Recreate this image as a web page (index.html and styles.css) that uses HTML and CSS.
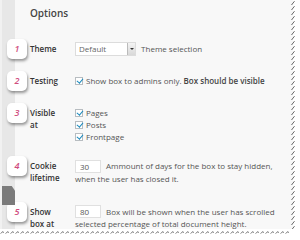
FILE: index.html
```html
<!DOCTYPE html>
<html lang="en">
  <head>
    <meta charset="UTF-8" />
    <title>Options</title>
    <link rel="stylesheet" href="styles.css">
  </head>
  <body>
    <div class="sheet">
      <div class="page">
        <!-- admin menu strip -->
        <div class="menu"><div class="menu-current"></div></div>

        <div class="content">
          <h2 class="title">Options</h2>

          <div class="row row-theme">
            <span class="badge">1</span>
            <div class="label">Theme</div>
            <div class="field">
              <span class="select">
                <span class="select-value">Default</span>
                <span class="select-arrow"></span>
              </span>
              <span class="hint">Theme selection</span>
            </div>
          </div>

          <div class="row row-testing">
            <span class="badge">2</span>
            <div class="label">Testing</div>
            <div class="field">
              <div class="check"><span class="box"></span>Show box to admins only.&nbsp;<strong>Box should be visible</strong></div>
            </div>
          </div>

          <div class="row row-visible">
            <span class="badge">3</span>
            <div class="label">Visible<br>at</div>
            <div class="field">
              <div class="check"><span class="box"></span>Pages</div>
              <div class="check"><span class="box"></span>Posts</div>
              <div class="check"><span class="box"></span>Frontpage</div>
            </div>
          </div>

          <div class="row row-cookie">
            <span class="badge">4</span>
            <div class="label">Cookie<br>lifetime</div>
            <div class="field">
              <span class="input">30</span>Ammount of days for the box to stay hidden,<br>when the user has closed it.
            </div>
          </div>

          <div class="row row-show">
            <span class="badge">5</span>
            <div class="label">Show<br>box at</div>
            <div class="field">
              <span class="input">80</span>Box will be shown when the user has scrolled<br>selected percentage of total document height.
            </div>
          </div>
        </div>

        <!-- torn paper, right side -->
        <svg class="edge-right" viewBox="0 0 8 229" preserveAspectRatio="none">
          <defs>
            <pattern id="tear-r" width="8" height="5" patternUnits="userSpaceOnUse">
              <path d="M1.5 5 L4.5 1.2" stroke="#666" stroke-width="1" fill="none" />
            </pattern>
          </defs>
          <rect x="0" y="0" width="3" height="229" fill="#f8f8f8" />
          <rect x="0" y="0" width="8" height="229" fill="url(#tear-r)" />
        </svg>
      </div>

      <!-- torn paper, bottom -->
      <svg class="edge-bottom" viewBox="0 0 296 6" preserveAspectRatio="none">
        <defs>
          <pattern id="tear-b" width="5" height="6" patternUnits="userSpaceOnUse">
            <path d="M0.5 4.5 L3 2.5 L3.5 4" stroke="#777" stroke-width="0.9" fill="none" />
          </pattern>
        </defs>
        <rect x="0" y="0" width="290" height="6" fill="url(#tear-b)" />
      </svg>
    </div>
  </body>
</html>
```

FILE: styles.css
```css
body {
  margin: 0;
  background-color: #ffffff;
  font-family: "Open Sans", "Liberation Sans", sans-serif;
}

.sheet {
  width: 298px;
}

.page {
  display: flex;
  height: 229px;
}

/* Bande du menu admin */
.menu {
  width: 15px;
  flex-shrink: 0;
  padding-top: 186px;
  box-sizing: border-box;
  background: linear-gradient(90deg, #f1f1f1 0 2px, #e7e7e7 2px);
}

.menu-current {
  width: 13px;
  height: 19px;
  margin-left: 2px;
  background-color: #7b7b7b;
  clip-path: polygon(0 0, 75% 0, 100% 25%, 100% 100%, 0 100%);
}

.content {
  flex: 1;
  background-color: #f8f8f8;
  padding-top: 6px;
  display: flex;
  flex-direction: column;
}

.title {
  margin: 0 0 0 15px;
  font-size: 10px;
  line-height: 14px;
  font-weight: 600;
  color: #444;
}

.row {
  display: grid;
  grid-template-columns: 20px 48px 1fr;
  margin-left: -8px;
  font-size: 8px;
  line-height: 12px;
  color: #555;
}

.row-theme { margin-top: 23px; }
.row-testing { margin-top: 19px; }
.row-visible { margin-top: 20px; }
.row-cookie { margin-top: 17px; }
.row-show { margin-top: 21px; }

.badge {
  width: 20px;
  height: 20px;
  margin: -4px 0;
  background-color: #ffffff;
  border-radius: 5px;
  box-shadow: 1px 2px 3px rgba(0, 0, 0, 0.4);
  color: #d04c7e;
  font-size: 9px;
  font-style: italic;
  font-weight: 600;
  display: flex;
  align-items: center;
  justify-content: center;
}

.label {
  padding-left: 3px;
  color: #333;
  font-weight: 600;
}

.field {
  white-space: nowrap;
}

.select {
  display: inline-flex;
  vertical-align: top;
  width: 61px;
  height: 14px;
  margin: -1px 3px 0 0;
  box-sizing: border-box;
  border: 1px solid #dcdcdc;
  background-color: #ffffff;
}

.select-value {
  flex: 1;
  padding-left: 3px;
  line-height: 12px;
  color: #666;
}

.select-arrow {
  width: 7px;
  border-left: 1px solid #bbb;
  background: linear-gradient(#f4f4f4, #d8d8d8);
  display: flex;
  align-items: center;
  justify-content: center;
}

.select-arrow::after {
  content: "";
  border-left: 2px solid transparent;
  border-right: 2px solid transparent;
  border-top: 2px solid #333;
}

.hint {
  color: #555;
}

.check {
  display: flex;
  align-items: center;
}

.check strong {
  font-weight: 600;
  color: #444;
}

.box {
  position: relative;
  width: 8px;
  height: 8px;
  margin-right: 3px;
  box-sizing: border-box;
  border: 1px solid #b8bdc1;
  background-color: #ffffff;
}

.box::after {
  content: "";
  position: absolute;
  left: 1.5px;
  top: -1px;
  width: 2.5px;
  height: 5px;
  border-right: 1.3px solid #1e8cbe;
  border-bottom: 1.3px solid #1e8cbe;
  transform: rotate(40deg);
}

.input {
  display: inline-block;
  vertical-align: top;
  width: 26px;
  height: 13px;
  margin: -0.5px 5px 0 0;
  padding-left: 4px;
  box-sizing: border-box;
  border: 1px solid #e0e0e0;
  background-color: #ffffff;
  line-height: 11px;
  color: #555;
}

.edge-right {
  width: 8px;
  height: 229px;
  flex-shrink: 0;
}

.edge-bottom {
  display: block;
  width: 296px;
  height: 6px;
}
```
